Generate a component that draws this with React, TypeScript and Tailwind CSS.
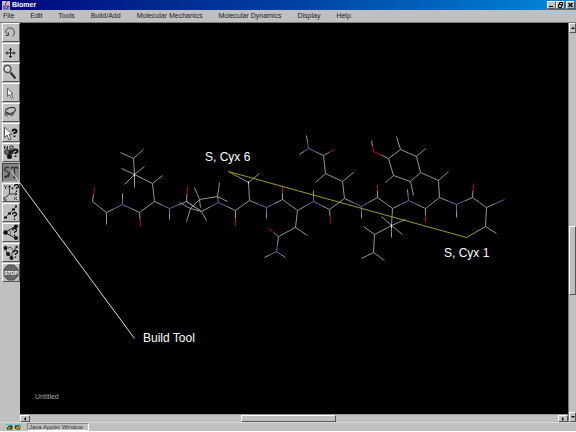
import type { ReactNode } from "react"

const MENUS = ["File", "Edit", "Tools", "Build/Add", "Molecular Mechanics", "Molecular Dynamics", "Display", "Help"]

const RAISED = "border border-t-white border-l-white border-r-[#555] border-b-[#555] bg-[#c0c0c0]"

// one chain is a list of [element, x, y] atoms joined in order
type Atom = [string, number, number]

const CHAINS: Atom[][] = [
  // backbone
  [
    ["C", 92, 201], ["C", 106, 212], ["N", 122, 204], ["C", 139, 212], ["C", 154, 201], ["N", 169, 208],
    ["C", 186, 201], ["C", 201, 211], ["N", 218, 202], ["C", 235, 210], ["C", 249, 200], ["N", 266, 207],
    ["C", 282, 199], ["C", 297, 210], ["N", 313, 201], ["C", 329, 209], ["C", 344, 198], ["N", 361, 206],
    ["C", 377, 197], ["C", 392, 208], ["N", 408, 200], ["C", 425, 208], ["C", 439, 197], ["N", 456, 204],
    ["C", 472, 197], ["C", 486, 207], ["N", 504, 199],
  ],
  // oxygens
  [["C", 92, 201], ["O", 94, 187]],
  [["C", 139, 212], ["O", 140, 226]],
  [["C", 186, 201], ["O", 187, 186]],
  [["C", 235, 210], ["O", 235, 225]],
  [["C", 282, 199], ["O", 282, 185]],
  [["C", 329, 209], ["O", 330, 223]],
  [["C", 377, 197], ["O", 377, 184]],
  [["C", 425, 208], ["O", 425, 222]],
  [["C", 472, 197], ["O", 473, 183]],
  // hydrogens
  [["C", 106, 212], ["C", 106, 224]],
  [["N", 122, 204], ["C", 122, 193]],
  [["N", 169, 208], ["C", 169, 219]],
  [["N", 266, 207], ["C", 266, 218]],
  [["N", 313, 201], ["C", 313, 190]],
  [["N", 361, 206], ["C", 361, 218]],
  [["N", 408, 200], ["C", 407, 189]],
  [["N", 456, 204], ["C", 456, 217]],
  // isoleucine
  [["C", 154, 201], ["C", 152, 183], ["C", 134, 174], ["C", 133, 158], ["C", 120, 152]],
  [["C", 133, 158], ["C", 143, 149]],
  [["C", 152, 183], ["C", 162, 175]],
  [["C", 121, 168], ["C", 134, 174], ["C", 144, 166]],
  [["C", 124, 184], ["C", 134, 174], ["C", 134, 187]],
  // proline
  [["C", 201, 211], ["C", 190, 208], ["C", 199, 199], ["C", 217, 196], ["N", 218, 202]],
  [["C", 179, 202], ["C", 190, 208], ["C", 186, 221]],
  [["C", 194, 187], ["C", 199, 199], ["C", 200, 207]],
  [["C", 219, 182], ["C", 217, 196], ["C", 227, 201]],
  [["C", 186, 201], ["C", 201, 211], ["C", 206, 220]],
  // cysteine 6
  [["C", 249, 200], ["C", 248, 182], ["S", 228, 171]],
  [["C", 248, 182], ["C", 259, 173]],
  // asparagine
  [["C", 297, 210], ["C", 295, 227], ["C", 278, 236], ["N", 276, 251], ["C", 264, 257]],
  [["C", 295, 227], ["C", 307, 235]],
  [["C", 278, 236], ["O", 268, 228]],
  [["N", 276, 251], ["C", 285, 257]],
  // glutamine
  [["C", 344, 198], ["C", 342, 181], ["C", 325, 173], ["C", 323, 155], ["N", 308, 148], ["C", 306, 135]],
  [["C", 342, 181], ["C", 353, 172]],
  [["C", 325, 173], ["C", 315, 182]],
  [["C", 323, 155], ["O", 334, 149]],
  [["N", 308, 148], ["C", 299, 154]],
  // leucine
  [["C", 392, 208], ["C", 391, 225], ["C", 374, 234], ["C", 373, 252], ["C", 361, 258]],
  [["C", 374, 234], ["C", 363, 226]],
  [["C", 373, 252], ["C", 384, 260]],
  [["C", 381, 216], ["C", 391, 225], ["C", 405, 219]],
  [["C", 402, 234], ["C", 391, 225], ["C", 391, 237]],
  // tyrosine
  [["C", 439, 197], ["C", 438, 180], ["C", 420, 172], ["C", 416, 156], ["C", 400, 149], ["C", 388, 158], ["C", 393, 175], ["C", 410, 181], ["C", 420, 172]],
  [["C", 438, 180], ["C", 448, 171]],
  [["C", 416, 156], ["C", 425, 148]],
  [["C", 400, 149], ["C", 396, 136]],
  [["C", 393, 175], ["C", 385, 182]],
  [["C", 410, 181], ["C", 413, 195]],
  [["C", 388, 158], ["O", 373, 151], ["C", 371, 140]],
  // cysteine 1
  [["C", 486, 207], ["C", 485, 226], ["S", 466, 237]],
  [["C", 485, 226], ["C", 496, 233]],
  // disulfide bridge
  [["S", 228, 171], ["S", 466, 237]],
]

const COLORS: Record<string, string> = { C: "#969696", N: "#6464a4", O: "#c00808", S: "#a09a20" }

function Molecule() {
  return (
    <svg className="absolute top-0 left-0 overflow-visible pointer-events-none" width="548" height="391" viewBox="20 23 548 391" aria-hidden="true">
      <g transform="translate(.5 .5)" fill="none">
        {CHAINS.map((chain, c) =>
          chain.slice(1).map(([el, x, y], i) => {
            const [prev, px, py] = chain[i]
            const mx = (px + x) / 2
            const my = (py + y) / 2
            return (
              <g key={`${c}-${i}`}>
                <path d={`M${px} ${py}L${mx} ${my}`} stroke={COLORS[prev]} />
                <path d={`M${mx} ${my}L${x} ${y}`} stroke={COLORS[el]} />
              </g>
            )
          })
        )}
        <path d="M134 173v3M391 224v3M248 181v2" stroke="#eee" />
        <path d="M11 171L134 338" stroke="#ddd" />
      </g>
    </svg>
  )
}

function Question({ x, y, bold }: { x: number; y: number; bold?: boolean }) {
  return (
    <path
      transform={`translate(${x} ${y})`}
      d="M.5 2.500Q.5.500 2.500.5T4.500 2.500Q4.500 3.500 2.500 4V5M2.500 6.500V8"
      stroke="#111"
      strokeWidth={bold ? 2 : 1.3}
    />
  )
}

const TOOLS: { name: string; icon: ReactNode }[] = [
  { name: "Rotate", icon: <path d="M5.500 11.500h-3M5.500 11.500v-3M4.500 10.500C.5 6 5 3.500 7.500 4c4.500.5 5 6 2 8.500" stroke="#444" /> },
  { name: "Move", icon: <path d="M7.500 4v10M2.500 9h10M6 5.500h3M6 12.500h3M4 7.500v3M11 7.500v3" stroke="#222" /> },
  {
    name: "Zoom",
    icon: (
      <>
        <circle cx="4.500" cy="5" r="3.500" fill="#ccc" stroke="#444" strokeWidth="1.300" />
        <path d="M3 5q0-2 2.500-2" stroke="#fff" strokeWidth="1.500" />
        <path d="M7.500 8.500l5 6" stroke="#333" strokeWidth="2.200" />
      </>
    ),
  },
  { name: "Select", icon: <path d="M4.500 4v8.500l2-2 2 4 1.500-1-2-3.500H10z" fill="#eee" stroke="#666" /> },
  {
    name: "Lasso",
    icon: (
      <>
        <ellipse cx="7.500" cy="6.500" rx="5" ry="2.800" stroke="#333" transform="rotate(-15 7.500 6.500)" />
        <path d="M2.500 8.500q4 3.500 8 .5l2-3M4 9q-3 0-2 2t3 0-1-3l5 4 2-3" stroke="#444" />
      </>
    ),
  },
  {
    name: "Query",
    icon: (
      <>
        <path d="M1.500 3v10.500L4 11l2 5 2-1-2-4.500h3z" fill="#fff" stroke="#555" />
        <Question x={9} y={5} bold />
      </>
    ),
  },
  {
    name: "Atom info",
    icon: (
      <>
        <path d="M1.500 5V2l3 3V2M7 2h3v3H7z" stroke="#333" />
        <circle cx="4" cy="8" r="2.500" fill="#666" stroke="#333" />
        <circle cx="8" cy="8" r="2.500" fill="#222" />
        <circle cx="6.500" cy="12.500" r="2.500" fill="#111" />
        <Question x={10} y={5} bold />
      </>
    ),
  },
  {
    name: "Build",
    icon: (
      <>
        <path d="M6 3.500H2.500L1.500 6l5 3-1 3.500h-4M7 9l-5 5" stroke="#333" strokeWidth="1.300" />
        <path d="M8.500 5V3.500h6V5M11.500 4v9M10 13.500h3" stroke="#333" strokeWidth="1.300" />
      </>
    ),
  },
  {
    name: "Coordinates",
    icon: (
      <>
        <path d="M6.500 1.500v8.500h7.500M6.500 10L2 14M5 3.500l1.500-2 1.500 2M12 8.500l2 1.500-2 1.500M1 1.500l1.500 2L4 1.500M2.500 3.500V5M1 13v3h3M11 13l3 3M14 13l-3 3" stroke="#333" />
        <circle cx="9.500" cy="4.500" r="1" fill="#222" stroke="none" />
        <Question x={11} y={0} />
      </>
    ),
  },
  {
    name: "Distance",
    icon: (
      <>
        <path d="M2 14L13 2.500" stroke="#555" />
        <path d="M1 13.500h3M5 9.500h3M9 5.500h3M12 2.500h2" stroke="#111" strokeWidth="2" />
        <Question x={9} y={8} />
      </>
    ),
  },
  {
    name: "Angle",
    icon: (
      <>
        <path d="M2 8.500L13 2M2 8.500l11 6" stroke="#222" />
        <g fill="#111" stroke="none">
          <circle cx="2.500" cy="8.500" r="2.200" />
          <circle cx="13" cy="2.500" r="2" />
          <circle cx="13" cy="14" r="2" />
        </g>
        <path d="M6 6q3 2 1 5" stroke="#555" />
        <Question x={9} y={4} />
      </>
    ),
  },
  {
    name: "Dihedral",
    icon: (
      <>
        <path d="M2 4.500l3 6 4 2.500V8l4-4M5 4q3-2 5 1.500" stroke="#444" />
        <g fill="#111" stroke="none">
          <circle cx="2.500" cy="4" r="2" />
          <circle cx="5" cy="10" r="2" />
          <circle cx="8.500" cy="14" r="2" />
          <circle cx="13.500" cy="3" r="1.200" />
        </g>
        <Question x={10} y={6} />
      </>
    ),
  },
]

function Toolbar() {
  return (
    <div role="toolbar" className="flex w-5 flex-col gap-px pl-0.5">
      {TOOLS.map(({ name, icon }) => (
        <button
          key={name}
          aria-label={name}
          className={name === "Build" ? "h-[19px] border border-t-[#444] border-l-[#444] border-r-[#aaa] border-b-[#aaa] bg-[#858585]" : `h-[19px] ${RAISED}`}
        >
          <svg width="16" height="17" viewBox="0 0 16 17" fill="none">
            {icon}
          </svg>
        </button>
      ))}
      <button aria-label="Stop" className={`h-[19px] ${RAISED}`}>
        <svg width="16" height="17" viewBox="0 0 16 17">
          <path d="M5 1h6l4 4v7l-4 4H5l-4-4V5z" fill="#666" stroke="#555" />
          <text x="8" y="11" textAnchor="middle" fill="#fff" className="font-['Liberation_Sans'] text-[5px] font-bold">STOP</text>
        </svg>
      </button>
    </div>
  )
}

function ArrowButton({ label, d, className }: { label: string; d: string; className: string }) {
  return (
    <button aria-label={label} className={`flex shrink-0 items-center justify-center ${RAISED} ${className}`}>
      <svg width="4" height="4" viewBox="0 0 4 4">
        <path d={d} />
      </svg>
    </button>
  )
}

function TitleBar() {
  return (
    <header className="flex h-2.5 items-center bg-linear-to-r from-[#00007c] via-[#0040a0] to-[#0888d8] pl-0.5">
      <svg width="8" height="9" viewBox="0 0 8 9" fill="none">
        <path d="M0 0h8v9H0z" fill="#c4bccc" />
        <path d="M4 0q2 1 0 2t0 2" stroke="#d02030" />
        <path d="M1 5h5v2H2zM6 5h1v1M1 8h6" stroke="#38388c" />
      </svg>
      <h1 className="ml-0.5 flex-1 text-[7px] leading-[10px] font-bold text-white">Biomer</h1>
      <div className="flex pr-px">
        <button aria-label="Minimize" className={`h-2 w-[9px] ${RAISED}`}>
          <svg width="7" height="6"><path d="M1 4h4v1H1z" /></svg>
        </button>
        <button aria-label="Restore" className={`h-2 w-[9px] ${RAISED}`}>
          <svg width="7" height="6" fill="none" stroke="#111"><path d="M2.500 2V.5h3v3H4M1.500 2.500h3v3h-3z" /></svg>
        </button>
        <button aria-label="Close" className={`ml-px h-2 w-[9px] ${RAISED}`}>
          <svg width="7" height="6" stroke="#111" strokeWidth="1.500"><path d="M1.500 1l4 4M5.500 1l-4 4" /></svg>
        </button>
      </div>
    </header>
  )
}

export default function App() {
  return (
    <div className="flex h-screen flex-col overflow-hidden bg-[#c0c0c0] font-['Liberation_Sans',sans-serif] text-black">
      <TitleBar />
      <nav className="flex h-[13px] shrink-0 items-center gap-4 border-b border-[#777] pl-[3px] text-[7px] leading-[12px] text-[#222]">
        {MENUS.map((menu) => (
          <button key={menu} className="whitespace-nowrap">{menu}</button>
        ))}
      </nav>

      <div className="flex min-h-0 flex-1">
        <Toolbar />
        <div className="flex min-w-0 flex-1 flex-col">
          <main className="relative flex-1 bg-black text-[12px] leading-4 text-white">
            <Molecule />
            <span className="absolute top-[126px] left-[185px]">S, Cyx 6</span>
            <span className="absolute top-[222px] left-[424px]">S, Cyx 1</span>
            <span className="absolute top-[307px] left-[123px]">Build Tool</span>
            <span className="absolute bottom-3 left-[15px] text-[7px] leading-[10px] text-[#aaa]">Untitled</span>
          </main>
          <div className="flex h-2 shrink-0 border-t border-[#999]">
            <ArrowButton label="Scroll left" d="M3 0v4L1 2z" className="w-2.5" />
            <div className="flex flex-1">
              <div className="w-[40%]" />
              <div className={`w-[18%] ${RAISED}`} />
            </div>
            <ArrowButton label="Scroll right" d="M1 0v4l2-2z" className="w-2.5" />
          </div>
        </div>
        <div className="flex w-2 flex-col border-l border-[#777]">
          <ArrowButton label="Scroll up" d="M0 3h4L2 1z" className="h-2.5" />
          <div className="flex flex-1 flex-col">
            <div className="h-[51%]" />
            <div className={`h-[18%] ${RAISED}`} />
          </div>
          <ArrowButton label="Scroll down" d="M0 1h4L2 3z" className="h-2.5" />
        </div>
      </div>

      <footer className="flex h-2.5 shrink-0 items-center border-t border-b border-t-[#d8d8d8] border-b-white pl-[5px]">
        <svg width="17" height="7" viewBox="0 0 17 7" fill="none">
          <path d="M0 0h8v7H0zM9 0h8v7H9z" fill="#b8c4b8" />
          <path d="M2 5l2-3h3v3zM10 2h5v3h-4z" fill="#807c10" stroke="#222" />
          <path d="M3 4h2M11 4h3M14 2l2 3" stroke="#d8d020" />
          <path d="M0 .5h8M9 .5h8" stroke="#60c8d0" />
        </svg>
        <div className="ml-[5px] h-2 w-[62px] border border-t-[#888] border-l-[#888] border-r-white border-b-white pl-px text-[6px] leading-[6px] whitespace-nowrap text-[#333]">
          Java Applet Window
        </div>
      </footer>
    </div>
  )
}
